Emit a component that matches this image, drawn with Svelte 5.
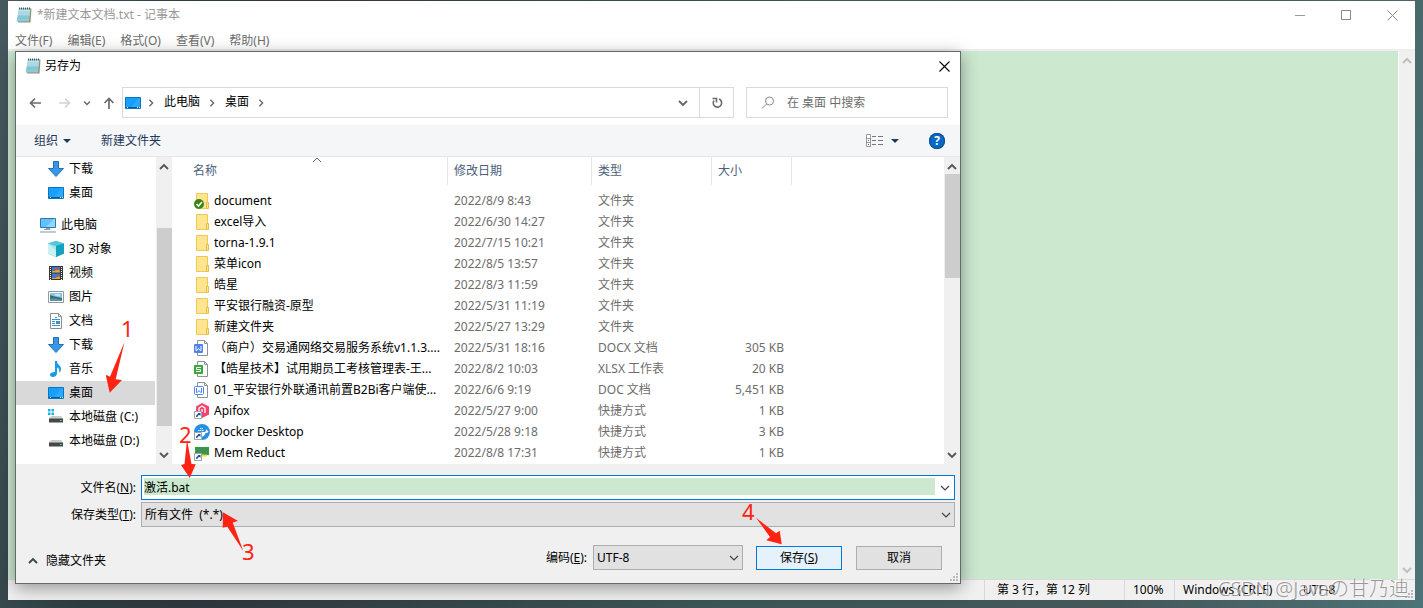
<script>
    const menus = ['文件(F)', '编辑(E)', '格式(O)', '查看(V)', '帮助(H)']

    const quickItems = [
        {icon: 'download', name: '下载'},
        {icon: 'desktop', name: '桌面'},
    ]

    const computerItems = [
        {icon: 'objects', name: '3D 对象'},
        {icon: 'video', name: '视频'},
        {icon: 'picture', name: '图片'},
        {icon: 'text', name: '文档'},
        {icon: 'download', name: '下载'},
        {icon: 'music', name: '音乐'},
        {icon: 'desktop', name: '桌面', selected: true},
        {icon: 'system-disk', name: '本地磁盘 (C:)'},
        {icon: 'disk', name: '本地磁盘 (D:)'},
    ]

    const files = [
        {icon: 'folder-ok', name: 'document', date: '2022/8/9 8:43', type: '文件夹', size: ''},
        {icon: 'folder', name: 'excel导入', date: '2022/6/30 14:27', type: '文件夹', size: ''},
        {icon: 'folder', name: 'torna-1.9.1', date: '2022/7/15 10:21', type: '文件夹', size: ''},
        {icon: 'folder', name: '菜单icon', date: '2022/8/5 13:57', type: '文件夹', size: ''},
        {icon: 'folder', name: '皓星', date: '2022/8/3 11:59', type: '文件夹', size: ''},
        {icon: 'folder', name: '平安银行融资-原型', date: '2022/5/31 11:19', type: '文件夹', size: ''},
        {icon: 'folder', name: '新建文件夹', date: '2022/5/27 13:29', type: '文件夹', size: ''},
        {icon: 'docx', name: '（商户）交易通网络交易服务系统v1.1.3....', date: '2022/5/31 18:16', type: 'DOCX 文档', size: '305 KB'},
        {icon: 'xlsx', name: '【皓星技术】试用期员工考核管理表-王...', date: '2022/8/2 10:03', type: 'XLSX 工作表', size: '20 KB'},
        {icon: 'doc', name: '01_平安银行外联通讯前置B2Bi客户端使...', date: '2022/6/6 9:19', type: 'DOC 文档', size: '5,451 KB'},
        {icon: 'apifox', name: 'Apifox', date: '2022/5/27 9:00', type: '快捷方式', size: '1 KB'},
        {icon: 'docker', name: 'Docker Desktop', date: '2022/5/28 9:18', type: '快捷方式', size: '3 KB'},
        {icon: 'mem', name: 'Mem Reduct', date: '2022/8/8 17:31', type: '快捷方式', size: '1 KB'},
    ]

    let content = $state('')
    let search = $state('')
    let filename = $state('激活.bat')
</script>

{#snippet chevron(dir, stroke = 1.2)}
  <svg class="chevron {dir}" width="10" height="10" viewBox="0 0 10 10" aria-hidden="true">
    <path d="M1 3l4 4 4-4" fill="none" stroke="currentColor" stroke-width={stroke}/>
  </svg>
{/snippet}

{#snippet shortcut()}
  <path d="M.5 8.500h7v7h-7z" fill="#fff" stroke="#9aa4ae"/>
  <path d="M2 14c0-2 1-3 2.400-3L3.500 10h3v3l-1-1C4 12 3.500 13 3.500 14z" fill="#1d4f91"/>
{/snippet}

{#snippet icon(kind)}
  <svg class="icon" width="16" height="16" viewBox="0 0 16 16" aria-hidden="true">
    {#if kind === 'notepad'}
      <path d="M4 1.500h11.500L14.500 15.500H2z" fill="#9a8b6d"/>
      <path d="M3 1.500h11.500L13 14.500H.5z" fill="#8ccbdb"/>
      <path d="M3 2.500h11l-.7 6H1.800z" fill="#bfe6ec"/>
      <path d="M2.500 5h11M2.200 7h11M1.800 9h11M1.500 11h11" stroke="#6cb3c5" stroke-width=".5"/>
      <path d="M3.500.5v2M5.500.5v2M7.500.5v2M9.500.5v2M11.500.5v2M13.500.5v2" stroke="#49585d"/>
    {:else if kind === 'download'}
      <path d="M5.500.5h5v7h5L8 15.500.5 7.500h5z" fill="#3a96e4" stroke="#2272b9"/>
    {:else if kind === 'desktop'}
      <path d="M.5 2.500h15v11H.5z" fill="#16a0fb" stroke="#0875bd"/>
      <path d="M1 12.500h14" stroke="#075a99"/>
      <path d="M2 12.500h1M12 12.500h1M14 12.500h1" stroke="#fff"/>
      <path d="M6 12L14 3h1v9z" fill="#fff" opacity=".1"/>
    {:else if kind === 'computer'}
      <path d="M.5 1.500h15v9H.5z" fill="#62c1fb" stroke="#2c7ba9"/>
      <path d="M6 10L14 2h1v8z" fill="#8fd7ff"/>
      <path d="M6 11.500h4v1H4" stroke="#8aa2b2" fill="none"/>
      <path d="M0 15h16" stroke="#7e93a4"/>
    {:else if kind === 'objects'}
      <path d="M8 0l8 2.500v10L8 16l-8-3.500v-10z" fill="#29b4ca"/>
      <path d="M8 0l8 2.500L8 5 0 2.500z" fill="#57c7d6"/>
      <path d="M0 2.500L8 5v11l-8-3.500z" fill="#a3e6ea"/>
      <path d="M0 2.500L8 10v6l-8-3.500z" fill="#c9f1f2"/>
      <path d="M8 5l8-2.500v10L8 16z" fill="#12a2bd"/>
    {:else if kind === 'video'}
      <path d="M1 1h14v14H1z" fill="#363636"/>
      <path d="M4 2h8v5.500H4zM4 8.500h8V14H4z" fill="#3e77d2"/>
      <path d="M4 6h3l2-2 3 2v1.500H4zM4 13h4l1-2 3 1v2H4z" fill="#e3a32c"/>
      <path d="M7 3h3v2H7zM8 10h2v2H8z" fill="#d34e33"/>
      <path d="M2.500 2v13M13.500 2v13" stroke="#fff" stroke-dasharray="1 1"/>
    {:else if kind === 'picture'}
      <path d="M.5 2.500h15v11H.5z" fill="#fff" stroke="#909aa5"/>
      <path d="M2 4h12v8H2z" fill="#8cc3ec"/>
      <path d="M2 6c3 1 6 2 12 3v3H2z" fill="#3c6f62"/>
      <path d="M2 10c4-1 8 0 12 1v1H2z" fill="#5f93b4"/>
      <path d="M7 6h5" stroke="#fff"/>
    {:else if kind === 'text'}
      <path d="M2.500.5h8l3 3v12h-11z" fill="#fff" stroke="#8a8f94"/>
      <path d="M10.500.5v3h3" fill="none" stroke="#8a8f94"/>
      <path d="M7 4.500h2M4 6.500h8M4 8.500h3M4 10.500h3M4 12.500h8" stroke="#3b93c8"/>
      <path d="M8 8h4v3H8z" fill="#3b93c8"/>
    {:else if kind === 'music'}
      <path d="M7 0h2c0 4 4 4 4 8 0 2-1 3-2 4 1-4-.5-5-2-5.500V12c0 2.500-2 4-4 4s-3-1-3-2.500S4 11 7 11z" fill="#149ce8"/>
    {:else if kind === 'disk' || kind === 'system-disk'}
      {#if kind === 'system-disk'}
        <path d="M0 0h2.500v2.500H0zM3.500 0H6v2.500H3.500zM0 3.500h2.500V6H0zM3.500 3.500H6V6H3.500z" fill="#12b5ef"/>
      {/if}
      <path d="M3 7h10l2 3H1z" fill="#c9cccd"/>
      <path d="M1 9.500h14v4H1z" fill="#444849"/>
      <path d="M1 9.500h14" stroke="#8c8f90"/>
      <path d="M12 11h1.500v1H12z" fill="#54e86b"/>
    {:else if kind === 'folder' || kind === 'folder-ok'}
      <path d="M2.500.5h11v15h-11z" fill="#ffe58f" stroke="#edca58"/>
      <path d="M12.500 9.500h2v6h-2z" fill="#ffe58f" stroke="#e5bd47"/>
      {#if kind === 'folder-ok'}
        <circle cx="5" cy="11" r="5" fill="#36860f"/>
        <path d="M2.500 11l2 2 3.500-4" fill="none" stroke="#fff" stroke-width="1.600"/>
      {/if}
    {:else if kind === 'docx' || kind === 'doc' || kind === 'xlsx'}
      <path d="M3.500.5h7l3 3v12h-10z" fill="#fff" stroke="#8d9297"/>
      <path d="M10.500.5v3h3" fill="none" stroke="#8d9297"/>
      {#if kind === 'docx'}
        <rect y="4" width="9" height="9" rx="1" fill="#4d83ee"/>
        <path d="M2 6v4.500h.8L4.500 8.500l1.700 2H7V6" fill="none" stroke="#fff"/>
      {:else if kind === 'doc'}
        <rect x=".5" y="4.500" width="9" height="8" rx="1" fill="#fff" stroke="#4d83ee"/>
        <path d="M2.500 6v4.500h.8L5 8.500l1.700 2h.8V6" fill="none" stroke="#4d83ee"/>
      {:else}
        <rect y="4" width="9" height="9" rx="1" fill="#36a936"/>
        <path d="M7 6.500H2.500v2h4v2H2" fill="none" stroke="#fff"/>
      {/if}
    {:else if kind === 'apifox'}
      <path d="M8 0l7 3.500v8L8 15 2 12V3.500z" fill="#f4426b"/>
      <path d="M5 10V5l3-2 3 2v5M8 6v3" stroke="#fff" fill="none" stroke-width="1.300"/>
      {@render shortcut()}
    {:else if kind === 'docker'}
      <circle cx="8" cy="8" r="8" fill="#2390e6"/>
      <path d="M2 8h9c1-1 1-2 1-3 1 1 1.500 2 2.500 2-.5 2-2 2-3 2-1 3-3 4-6 4-2 0-3.500-2-3.500-5z" fill="#fff"/>
      <path d="M4 6.500h6M6 4.500h3" stroke="#fff" stroke-dasharray="1.500 .5"/>
      {@render shortcut()}
    {:else if kind === 'mem'}
      <path d="M1 2h14v8H1z" fill="#28a33c"/>
      <path d="M3 4h2v4H3zM7 4h2v4H7zM11 4h2v4h-2z" fill="#6d7279"/>
      <path d="M8 10.500h5" stroke="#e8dd39" stroke-width="2"/>
      {@render shortcut()}
    {/if}
  </svg>
{/snippet}

{#snippet treeItem(item)}
  <li>
    <a href="#folder" class="tree-item" class:selected={item.selected}>
      {@render icon(item.icon)}
      <span>{item.name}</span>
    </a>
  </li>
{/snippet}

{#snippet grip()}
  <svg width="9" height="9" viewBox="0 0 9 9" aria-hidden="true">
    <path d="M7 0h2v2H7zM4 3h2v2H4zM7 3h2v2H7zM1 6h2v2H1zM4 6h2v2H4zM7 6h2v2H7z" fill="#bcbcbc"/>
  </svg>
{/snippet}

<div class="wallpaper">
  <div class="notepad">
    <header class="notepad-title">
      {@render icon('notepad')}
      <span class="caption">*新建文本文档.txt - 记事本</span>
      <button class="window-button" aria-label="最小化">
        <svg width="11" height="11" viewBox="0 0 11 11"><path d="M0 5.500h10" stroke="#999"/></svg>
      </button>
      <button class="window-button" aria-label="最大化">
        <svg width="11" height="11" viewBox="0 0 11 11"><path d="M.5.5h9v9h-9z" fill="none" stroke="#888"/></svg>
      </button>
      <button class="window-button" aria-label="关闭">
        <svg width="11" height="11" viewBox="0 0 11 11"><path d="M.5.5l10 10M10.500.5l-10 10" stroke="#888"/></svg>
      </button>
    </header>
    <nav class="menu">
      {#each menus as menu}
        <button>{menu}</button>
      {/each}
    </nav>
    <div class="editor">
      <textarea aria-label="正文" bind:value={content}></textarea>
      <div class="scrollbar disabled">
        {@render chevron('up', 2)}
        {@render chevron('down', 2)}
      </div>
    </div>
    <footer class="status">
      <span class="position">第 3 行，第 12 列</span>
      <span class="zoom">100%</span>
      <span class="ending">Windows (CRLF)</span>
      <span class="ending">UTF-8</span>
      <div class="grip">{@render grip()}</div>
    </footer>
  </div>

  <div class="dialog" role="dialog" aria-label="另存为">
    <header class="dialog-title">
      {@render icon('notepad')}
      <span class="caption">另存为</span>
      <button class="close" aria-label="关闭">
        <svg width="11" height="11" viewBox="0 0 11 11"><path d="M.5.5l10 10M10.500.5l-10 10" stroke="#000" stroke-width="1.100"/></svg>
      </button>
    </header>

    <div class="navigation">
      <div class="history">
        <button aria-label="后退">
          <svg width="13" height="12" viewBox="0 0 13 12"><path d="M6 1.500L1.500 6 6 10.500M1.500 6H12" fill="none" stroke="#6b6b6b" stroke-width="1.700"/></svg>
        </button>
        <button aria-label="前进">
          <svg width="13" height="12" viewBox="0 0 13 12"><path d="M7 1.500L11.500 6 7 10.500M11.500 6H1" fill="none" stroke="#d4d4d4" stroke-width="1.700"/></svg>
        </button>
        <button class="recent" aria-label="最近浏览的位置">
          <svg width="8" height="6" viewBox="0 0 8 6"><path d="M1 1.500l3 3 3-3" fill="none" stroke="#6b6b6b" stroke-width="1.500"/></svg>
        </button>
        <button aria-label="上移">
          <svg width="12" height="12" viewBox="0 0 12 12"><path d="M1.500 6L6 1.500 10.500 6M6 1.500V12" fill="none" stroke="#6b6b6b" stroke-width="1.700"/></svg>
        </button>
      </div>
      <div class="address">
        {@render icon('desktop')}
        {@render chevron('right small', 1.700)}
        <a href="#computer">此电脑</a>
        {@render chevron('right small', 1.700)}
        <a href="#desktop">桌面</a>
        {@render chevron('right small', 1.700)}
        <button class="previous" aria-label="以前的位置">{@render chevron('down', 1.800)}</button>
        <button class="refresh" aria-label="刷新">
          <svg width="12" height="12" viewBox="0 0 12 12"><path d="M1.500 1.500h4v4M3 3.500a4.200 4.200 0 1 0 5-1.500" fill="none" stroke="#6b6b6b" stroke-width="1.600"/></svg>
        </button>
      </div>
      <label class="search">
        <svg width="14" height="14" viewBox="0 0 14 14" aria-hidden="true"><circle cx="8.500" cy="5" r="4" fill="none" stroke="#8b8490"/><path d="M5.500 8L1 12.500" stroke="#8b8490"/></svg>
        <input type="text" placeholder="在 桌面 中搜索" aria-label="搜索" bind:value={search}>
      </label>
    </div>

    <div class="toolbar">
      <button>组织 <i class="triangle"></i></button>
      <button>新建文件夹</button>
      <button class="view" aria-label="更改您的视图">
        <svg width="17" height="13" viewBox="0 0 17 13"><path d="M.5.5h4v12h-4zM.5 4.500h4M.5 8.500h4" fill="#fff" stroke="#999"/><path d="M6 2.500h4M12 2.500h5M6 6.500h4M12 6.500h5M6 10.500h4M12 10.500h5" stroke="#777"/><path d="M2 6h1v1H2z" fill="#3576c4"/><path d="M2 10h1v1H2z" fill="#c33"/></svg>
        <i class="triangle"></i>
      </button>
      <button class="help" aria-label="获取帮助">?</button>
    </div>

    <div class="browser">
      <nav class="tree">
        <ul>
          {#each quickItems as item}
            {@render treeItem(item)}
          {/each}
        </ul>
        <a href="#computer" class="tree-item root">
          {@render icon('computer')}
          <span>此电脑</span>
        </a>
        <ul>
          {#each computerItems as item}
            {@render treeItem(item)}
          {/each}
        </ul>
      </nav>
      <div class="scrollbar tree-bar">
        {@render chevron('up', 1.900)}
        <div class="thumb"></div>
        {@render chevron('down', 1.900)}
      </div>
      <div class="list">
        <table>
          <thead>
            <tr>
              <th class="name">名称 <span class="sort">{@render chevron('up', 1)}</span></th>
              <th class="date">修改日期</th>
              <th class="type">类型</th>
              <th class="size">大小</th>
              <th class="rest" aria-label="空"></th>
            </tr>
          </thead>
          <tbody>
            {#each files as file}
              <tr>
                <td class="file"><span>{@render icon(file.icon)}{file.name}</span></td>
                <td>{file.date}</td>
                <td>{file.type}</td>
                <td class="amount">{file.size}</td>
              </tr>
            {/each}
          </tbody>
        </table>
      </div>
      <div class="scrollbar list-bar">
        {@render chevron('up', 1.900)}
        <div class="thumb"></div>
        {@render chevron('down', 1.900)}
      </div>
    </div>

    <div class="form">
      <div class="fields">
        <label for="filename">文件名(<u>N</u>):</label>
        <div class="combo">
          <input id="filename" type="text" bind:value={filename}>
          <button aria-label="展开">{@render chevron('down')}</button>
        </div>
        <label for="filetype">保存类型(<u>T</u>):</label>
        <div class="select">
          <select id="filetype">
            <option>所有文件&nbsp; (*.*)</option>
          </select>
          {@render chevron('down')}
        </div>
      </div>
      <div class="actions">
        <button class="collapse">{@render chevron('up', 1.900)} 隐藏文件夹</button>
        <label for="encoding">编码(<u>E</u>):</label>
        <div class="select encoding">
          <select id="encoding">
            <option>UTF-8</option>
          </select>
          {@render chevron('down')}
        </div>
        <button class="push primary">保存(<u>S</u>)</button>
        <button class="push">取消</button>
      </div>
      <div class="grip">{@render grip()}</div>
    </div>
  </div>

  <svg class="steps" width="960" height="600" viewBox="0 0 960 600">
    <path d="M124.500 342L115.700 379.300 122 380 109.700 392.700 105.700 374.700 110 376.700z"/>
    <path d="M187 440l4.500 24 4.200.3-6 13.700-8.700-13 3.500-1z"/>
    <path d="M243.300 551L232.700 522.500 238 521 223 512.300 222.700 527.700 227.300 526.700z"/>
    <path d="M756 517.700L776 533.300 779.700 530.700 781.700 544.300 766.300 540.300 770 537z"/>
    <text x="121" y="337">1</text>
    <text x="179" y="443">2</text>
    <text x="242" y="560">3</text>
    <text x="742" y="520">4</text>
  </svg>

  <span class="watermark">CSDN @Javaの甘乃迪</span>
</div>

<style>
    :global(body) {
        font: 12px/16px "Noto Sans", "Noto Sans CJK SC", sans-serif;
        color: #000;
    }

    button, input, select, textarea {
        font: inherit;
        color: inherit;
        margin: 0;
        padding: 0;
        border: 0;
        background: none;
        outline: none;
        border-radius: 0;
    }

    button {
        display: flex;
        align-items: center;
        justify-content: center;
    }

    a {
        color: inherit;
        text-decoration: none;
    }

    ul {
        list-style: none;
        margin: 0;
        padding: 0;
    }

    svg {
        display: block;
        flex: none;
    }

    .chevron.up {
        transform: rotate(180deg);
    }

    .chevron.right {
        transform: rotate(-90deg);
    }

    .chevron.small {
        width: 8px;
        height: 8px;
    }

    .wallpaper {
        box-sizing: border-box;
        position: relative;
        display: flex;
        min-height: 100vh;
        overflow: hidden;
        padding: 1px 8px 8px;
        background: linear-gradient(100deg, #46595f 0%, #2d3d40 12%, #30363d 20%, #3c5756 55%, #46575a 80%, #4c7377 100%);
    }

    .notepad {
        flex: 1;
        display: flex;
        flex-direction: column;
        background: #fff;
    }

    .notepad-title {
        display: flex;
        align-items: center;
        height: 28px;
        padding-left: 8px;
        color: #999;
    }

    .caption {
        margin: 0 auto 0 5px;
    }

    .window-button {
        width: 46px;
        height: 28px;
    }

    .menu {
        display: flex;
        gap: 1px;
        height: 20px;
        color: #6d6d6d;
    }

    .menu button {
        padding: 3px 7px 0;
    }

    .editor {
        flex: 1;
        display: flex;
        border-top: 2px solid #eee;
    }

    textarea {
        flex: 1;
        resize: none;
        background: #cce8cf;
        border-right: 1px solid #fff;
    }

    .scrollbar {
        flex: none;
        display: flex;
        flex-direction: column;
        align-items: center;
        justify-content: space-between;
        box-sizing: border-box;
        width: 16px;
        padding: 5px 0 4px;
        background: #f0f0f0;
        color: #555;
    }

    .scrollbar.disabled {
        color: #bfbfbf;
    }

    .thumb {
        width: 15px;
        background: #cdcdcd;
    }

    .status {
        position: relative;
        display: flex;
        justify-content: flex-end;
        align-items: stretch;
        height: 20px;
        line-height: 20px;
        padding-right: 1px;
        border-top: 1px solid #d9d9d9;
        background: #f0f0f0;
    }

    .status span {
        box-sizing: border-box;
        padding-left: 8px;
        border-left: 1px solid #d7d7d7;
        white-space: nowrap;
    }

    .status .position {
        width: 140px;
        padding-left: 12px;
    }

    .status .zoom {
        width: 50px;
    }

    .status .ending {
        width: 120px;
    }

    .grip {
        position: absolute;
        right: 2px;
        bottom: 1px;
    }

    .dialog {
        position: absolute;
        left: 15px;
        top: 51px;
        box-sizing: border-box;
        width: min(946px, calc(100% - 30px));
        border: 1px solid #626b68;
        background: #fff;
        box-shadow: 0 4px 16px rgba(0, 0, 0, .38);
    }

    .dialog-title {
        display: flex;
        align-items: center;
        height: 28px;
        padding: 0 10px 2px 9px;
    }

    .dialog-title .caption {
        margin-left: 4px;
    }

    .navigation {
        display: flex;
        height: 31px;
        padding: 5px 12px 7px 13px;
    }

    .history {
        display: flex;
        align-items: center;
        gap: 16px;
        width: 93px;
    }

    .history .recent {
        margin: 0 -4px;
    }

    .address {
        flex: 1;
        display: flex;
        align-items: center;
        border: 1px solid #d9d9d9;
        padding-left: 2px;
        margin-right: 12px;
        color: #666;
    }

    .address a {
        color: #000;
        margin: 0 8px 1px 9px;
    }

    .address .icon {
        margin-right: 6px;
    }

    .previous {
        width: 32px;
        height: 29px;
        margin-left: auto;
    }

    .refresh {
        width: 34px;
        height: 29px;
        border-left: 1px solid #d9d9d9;
    }

    .search {
        display: flex;
        align-items: center;
        box-sizing: border-box;
        width: 202px;
        padding-left: 14px;
        gap: 12px;
        border: 1px solid #d9d9d9;
    }

    .search input {
        flex: 1;
        min-width: 0;
    }

    .search input::placeholder {
        color: #6d6d6d;
        opacity: 1;
    }

    .toolbar {
        display: flex;
        align-items: center;
        gap: 30px;
        height: 31px;
        padding: 0 15px 0 18px;
        border-bottom: 1px solid #e5e7e9;
        background: #f5f6f7;
        color: #1e395b;
    }

    .triangle {
        margin-left: 5px;
        border: 4px solid transparent;
        border-top-color: #1e395b;
        border-bottom: 0;
    }

    .view {
        margin-left: auto;
    }

    .view .triangle {
        margin-left: 8px;
    }

    .help {
        width: 16px;
        height: 16px;
        border-radius: 50%;
        background: #0768c8;
        box-shadow: inset 0 0 0 1px #0a4c8c;
        color: #fff;
        font-weight: bold;
    }

    .browser {
        display: flex;
        height: 307px;
    }

    .tree {
        width: 140px;
        overflow: hidden;
        white-space: nowrap;
    }

    .tree-item {
        display: flex;
        align-items: center;
        gap: 5px;
        height: 24px;
        margin-right: 1px;
        padding-left: 32px;
    }

    .tree-item.root {
        margin-top: 8px;
        padding-left: 24px;
    }

    .tree-item.selected {
        background: #d9d9d9;
    }

    .tree-bar .thumb {
        height: 198px;
        margin-top: 56px;
    }

    .tree-bar .thumb, .list-bar .thumb {
        margin-bottom: auto;
    }

    .list-bar .thumb {
        height: 104px;
        margin-top: 2px;
    }

    .list {
        flex: 1;
        min-width: 0;
        overflow: hidden;
    }

    table {
        width: 100%;
        table-layout: fixed;
        border-collapse: separate;
        border-spacing: 0;
        color: #6d6d6d;
        white-space: nowrap;
    }

    th {
        box-sizing: border-box;
        height: 28px;
        padding: 0 0 0 6px;
        border-right: 1px solid #e5e5e5;
        font-weight: normal;
        text-align: left;
        color: #4c607a;
    }

    th.name {
        position: relative;
        width: 276px;
        padding-left: 21px;
    }

    th.date {
        width: 144px;
    }

    th.type {
        width: 120px;
    }

    th.size {
        width: 80px;
    }

    th.rest {
        border: 0;
    }

    .sort {
        position: absolute;
        left: 140px;
        top: -2px;
    }

    tbody::before {
        content: "";
        display: block;
        height: 5px;
    }

    td {
        height: 21px;
        padding: 0 0 0 6px;
    }

    .file {
        padding-left: 22px;
        color: #000;
    }

    .file span {
        display: flex;
        align-items: center;
        gap: 4px;
    }

    .amount {
        padding-right: 8px;
        text-align: right;
    }

    .form {
        position: relative;
        padding: 11px 5px 13px 12px;
        background: #f0f0f0;
    }

    .fields {
        display: grid;
        grid-template-columns: 108px 1fr;
        grid-auto-rows: 25px;
        gap: 2px 5px;
        align-items: center;
    }

    .fields label {
        text-align: right;
    }

    .combo {
        display: flex;
        align-items: center;
        box-sizing: border-box;
        height: 25px;
        border: 1px solid #0078d7;
        background: #fff;
        padding-left: 2px;
    }

    .combo input {
        flex: 1;
        height: 17px;
        margin-bottom: 2px;
        background: #cce8cf;
    }

    .combo button {
        width: 19px;
        height: 23px;
        color: #444;
    }

    .select {
        display: grid;
        align-items: center;
        height: 25px;
    }

    .select > :global(*) {
        grid-area: 1 / 1;
    }

    .select .chevron {
        justify-self: end;
        margin-right: 4px;
        color: #444;
        pointer-events: none;
    }

    select {
        appearance: none;
        box-sizing: border-box;
        width: 100%;
        height: 25px;
        padding-left: 3px;
        border: 1px solid #adadad;
        background: #e1e1e1;
    }

    .actions {
        display: flex;
        align-items: center;
        margin-top: 18px;
        padding-right: 13px;
    }

    .collapse {
        gap: 8px;
        margin: 7px auto 0 0;
    }

    .collapse .chevron {
        color: #444;
    }

    .encoding {
        width: 150px;
        margin: 0 13px 0 6px;
    }

    .push {
        box-sizing: border-box;
        width: 86px;
        height: 24px;
        border: 1px solid #adadad;
        background: #e1e1e1;
    }

    .push.primary {
        margin-right: 14px;
        border-color: #0078d7;
        background: #e5f1fb;
    }

    .steps {
        position: absolute;
        left: 0;
        top: 0;
        fill: #ff2314;
        font-size: 22px;
        pointer-events: none;
    }

    .watermark {
        position: absolute;
        right: 14px;
        bottom: 6px;
        font: 20px/26px "Noto Sans", "Noto Sans CJK SC", sans-serif;
        font-weight: 300;
        color: rgba(135, 135, 135, .85);
        text-shadow: -1px -1px 0 rgba(255, 255, 255, .6);
        pointer-events: none;
    }
</style>
